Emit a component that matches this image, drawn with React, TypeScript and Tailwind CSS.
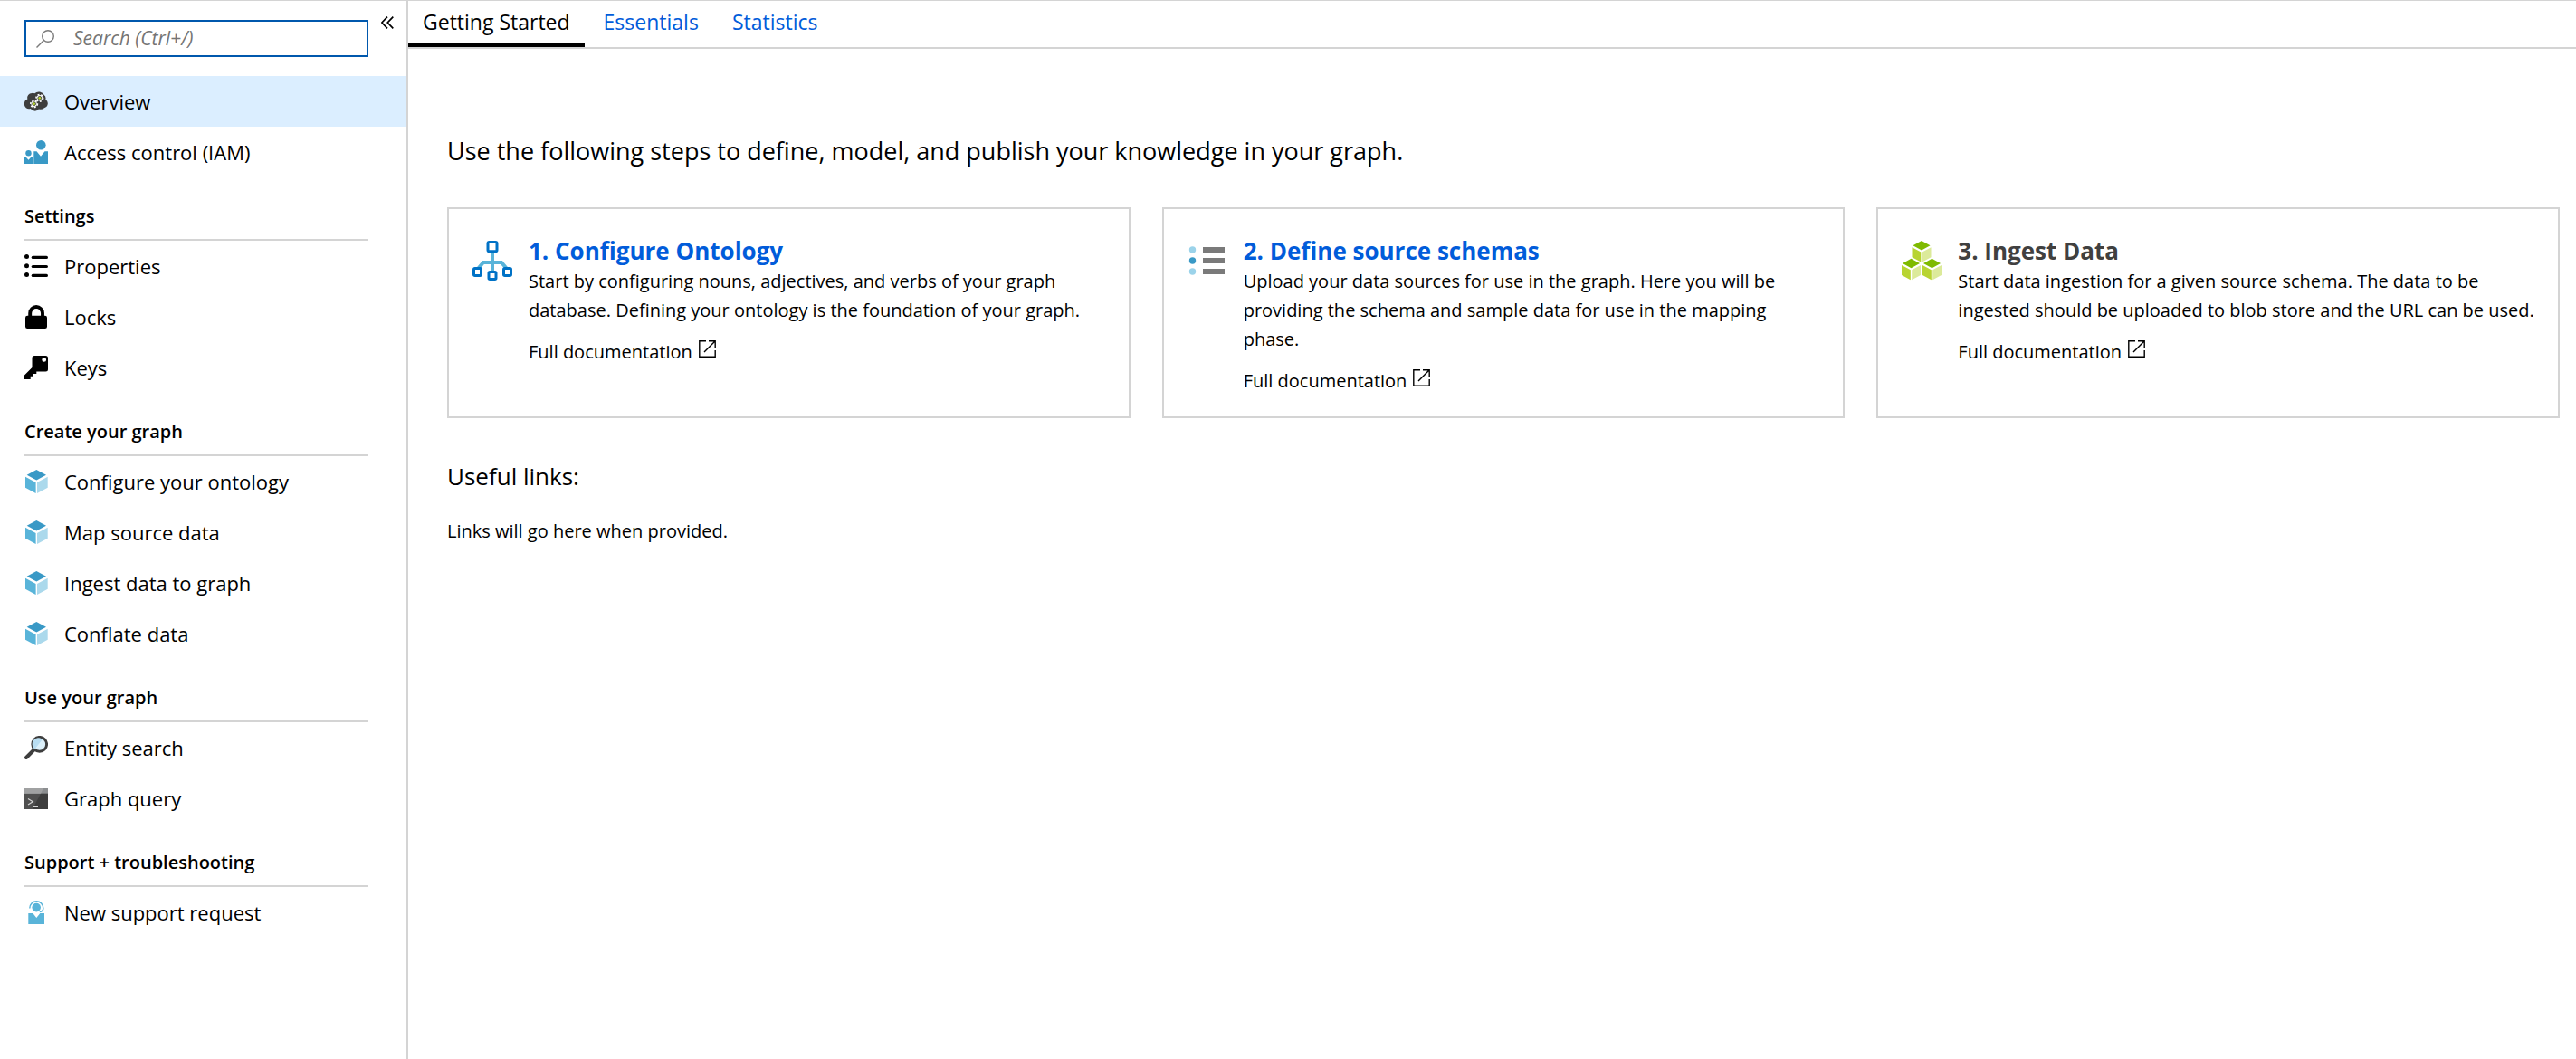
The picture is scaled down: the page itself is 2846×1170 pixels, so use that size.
import type { ReactNode } from "react";

const icon = "size-[26px] shrink-0";

function Gear({ cx, cy, r }: { cx: number; cy: number; r: number }) {
  return (
    <g>
      <circle cx={cx} cy={cy} r={r} fill="#fff" />
      <circle cx={cx} cy={cy} r={r + 0.6} fill="none" stroke="#fff" strokeWidth="1.6" strokeDasharray="1.9 1.9" />
      <circle cx={cx} cy={cy} r="1.9" fill="#b8d432" stroke="#3e3e3e" strokeWidth="0.9" />
    </g>
  );
}

function OverviewIcon() {
  return (
    <svg viewBox="0 0 26 26" className={icon} aria-hidden="true">
      <path
        d="M8.2 3.9a5 5 0 0 1 3.1.4A6.6 6.6 0 0 1 21.8 6a4.6 4.6 0 0 1 1.500 5 5 5 0 0 1-1.400 9.200 6 6 0 0 1-6 1.300 5.400 5.400 0 0 1-9-.6A5 5 0 0 1 0 15.500a5 5 0 0 1 3.400-5.100 5 5 0 0 1 4.800-6.500Z"
        fill="#3e3e3e"
      />
      <Gear cx={16.8} cy={9.3} r={3.2} />
      <Gear cx={10.6} cy={15.7} r={3.2} />
    </svg>
  );
}

function PeopleIcon() {
  return (
    <svg viewBox="0 0 26 26" className={icon} fill="#3999c6" aria-hidden="true">
      <circle cx="18.3" cy="5.3" r="5.3" />
      <path d="M10.3 12.3h3.200L18 17.800l4.500-5.500H26V26H10.300Z" />
      <circle cx="4.5" cy="14.3" r="3.2" />
      <path d="M0 18.800h1.800l2.700 3 2.700-3H9V26H0Z" />
    </svg>
  );
}

function ListIcon() {
  return (
    <svg viewBox="0 0 26 26" className={icon} aria-hidden="true">
      {[2.6, 12.7, 22.6].map((y) => (
        <g key={y}>
          <circle cx="2.5" cy={y} r="2.5" />
          <rect x="7.7" y={y - 0.8} width="18.3" height="3.2" rx="1.6" />
        </g>
      ))}
    </svg>
  );
}

function LockIcon() {
  return (
    <svg viewBox="0 0 26 26" className={icon} aria-hidden="true">
      <rect x="1" y="11.7" width="24" height="14.3" rx="2.2" />
      <path d="M6.200 13V9a6.900 7 0 0 1 13.800 0v4" fill="none" stroke="#000" strokeWidth="3.9" />
    </svg>
  );
}

function KeyIcon() {
  return (
    <svg viewBox="0 0 26 26" className={icon} aria-hidden="true">
      <path
        fillRule="evenodd"
        d="M11 0h12.500A2.500 2.500 0 0 1 26 2.500V15a2.500 2.500 0 0 1-2.500 2.500H13.300V20H10v2.700H6.700V26H0v-4.500l8.500-8.500V2.500A2.500 2.500 0 0 1 11 0Zm10.700 2a2.400 2.400 0 1 0 0 4.800 2.400 2.400 0 0 0 0-4.800Z"
      />
    </svg>
  );
}

function CubeIcon() {
  return (
    <svg viewBox="0 0 26 26" className={icon} aria-hidden="true">
      <path d="M13.300 0 24 5.800l-10.700 5.800L2.700 5.800Z" fill="#3999c6" />
      <path d="M1 7.700 12.600 14v12L1 19.800Z" fill="#59b4d9" />
      <path d="M25.700 7.700 14 14v12l11.700-6.200Z" fill="#abd9ec" />
    </svg>
  );
}

function MagnifierIcon() {
  return (
    <svg viewBox="0 0 26 26" className={icon} aria-hidden="true">
      <path d="m2 24 8.500-8.500" stroke="#3e3e3e" strokeWidth="4" strokeLinecap="round" />
      <circle cx="16.7" cy="9.3" r="7.9" fill="#dcf0fa" stroke="#3e3e3e" strokeWidth="2.9" />
      <path d="M11.300 14.700A6.500 6.500 0 0 1 20 3.700Z" fill="#b9def2" />
    </svg>
  );
}

function TerminalIcon() {
  return (
    <svg viewBox="0 0 26 26" className={icon} aria-hidden="true">
      <path d="M0 2h26v23H0Z" fill="#3e3e3e" />
      <path d="M0 2h21L9 25H0Z" fill="#4f4f4f" />
      <path d="M0 2h26v5.700H0Z" fill="#8c8e90" />
      <path d="M0 2h21l-3 5.700H0Z" fill="#a0a1a2" />
      <path d="m4 13.500 5.300 3.200L4 20M9.300 22.300H15" fill="none" stroke="#d4d4d4" strokeWidth="1.2" />
    </svg>
  );
}

function SupportIcon() {
  return (
    <svg viewBox="0 0 26 26" className={icon} fill="#59b4d9" aria-hidden="true">
      <circle cx="13.2" cy="7.6" r="4.8" />
      <path d="M5.800 8.500a7.500 7.700 0 0 1 15 0c0 2-1 3.500-4 4" fill="none" stroke="#59b4d9" strokeWidth="1.5" />
      <path d="M4.300 14h5l4 5 4-5H22v12H4.300Z" />
    </svg>
  );
}

function HierarchyIcon() {
  return (
    <svg viewBox="0 0 44 44" className="mt-[7px] size-11 shrink-0" fill="none" aria-hidden="true">
      <path d="M22 13v20M6 31l6-7h20l6 7" stroke="#59b4d9" strokeWidth="4" />
      <g fill="#fff" stroke="#0072c6" strokeWidth="3">
        <rect x="17" y="1.5" width="10" height="10.3" rx="1.5" />
        <rect x="1.5" y="30.5" width="8" height="8" rx="1.2" />
        <rect x="18" y="34.5" width="8" height="8" rx="1.2" />
        <rect x="34.5" y="30.5" width="8" height="8" rx="1.2" />
      </g>
    </svg>
  );
}

function SchemaIcon() {
  return (
    <svg viewBox="0 0 44 44" className="mt-[7px] size-11 shrink-0" aria-hidden="true">
      {[10, 22, 34].map((y) => (
        <g key={y}>
          <circle cx="5.5" cy={y} r="3.7" fill={y === 22 ? "#3999c6" : "#9bd3ea"} />
          <rect x="17" y={y - 3} width="24" height="6" fill="#7a7a7a" />
        </g>
      ))}
    </svg>
  );
}

function BlocksIcon() {
  return (
    <svg viewBox="0 0 44 44" className="mt-[7px] size-11 shrink-0" aria-hidden="true">
      {["translate(11.5 0)", "translate(0 19.7)", "translate(23 19.7)"].map((t) => (
        <g key={t} transform={t}>
          <path d="m10.500 0 9.500 5.300-9.500 5.300L1 5.300Z" fill="#7fba00" />
          <path d="m0 7.200 9.800 5.400v11L0 18.300Z" fill="#b8d432" />
          <path d="m21 7.200-9.800 5.400v11l9.800-5.300Z" fill="#dcea9a" />
        </g>
      ))}
    </svg>
  );
}

type Item = { label: string; icon: ReactNode; active?: boolean };

function NavItem({ item }: { item: Item }) {
  return (
    <li>
      <a
        href="#"
        aria-current={item.active ? "page" : undefined}
        className={`flex h-14 items-center gap-[18px] pl-[27px] text-[22px] ${item.active ? "bg-[#dbeeff]" : ""}`}
      >
        {item.icon}
        {item.label}
      </a>
    </li>
  );
}

const topItems: Item[] = [
  { label: "Overview", icon: <OverviewIcon />, active: true },
  { label: "Access control (IAM)", icon: <PeopleIcon /> },
];

const sections: { title: string; items: Item[] }[] = [
  {
    title: "Settings",
    items: [
      { label: "Properties", icon: <ListIcon /> },
      { label: "Locks", icon: <LockIcon /> },
      { label: "Keys", icon: <KeyIcon /> },
    ],
  },
  {
    title: "Create your graph",
    items: [
      { label: "Configure your ontology", icon: <CubeIcon /> },
      { label: "Map source data", icon: <CubeIcon /> },
      { label: "Ingest data to graph", icon: <CubeIcon /> },
      { label: "Conflate data", icon: <CubeIcon /> },
    ],
  },
  {
    title: "Use your graph",
    items: [
      { label: "Entity search", icon: <MagnifierIcon /> },
      { label: "Graph query", icon: <TerminalIcon /> },
    ],
  },
  {
    title: "Support + troubleshooting",
    items: [{ label: "New support request", icon: <SupportIcon /> }],
  },
];

const cards = [
  {
    title: "1. Configure Ontology",
    link: true,
    icon: <HierarchyIcon />,
    text: "Start by configuring nouns, adjectives, and verbs of your graph database. Defining your ontology is the foundation of your graph.",
  },
  {
    title: "2. Define source schemas",
    link: true,
    icon: <SchemaIcon />,
    text: "Upload your data sources for use in the graph. Here you will be providing the schema and sample data for use in the mapping phase.",
  },
  {
    title: "3. Ingest Data",
    link: false,
    icon: <BlocksIcon />,
    text: "Start data ingestion for a given source schema. The data to be ingested should be uploaded to blob store and the URL can be used.",
  },
];

function Sidebar() {
  return (
    <aside className="w-[451px] shrink-0 border-r-2 border-[#d4d4d4] pt-[21px]">
      <div className="mb-[21px] flex items-start pl-[27px]">
        <label className="flex h-[41px] w-[380px] items-center gap-[21px] border-2 border-[#0058ad] pl-[11px]">
          <svg viewBox="0 0 20 20" className="size-5 shrink-0" fill="none" stroke="#7a7a7a" strokeWidth="1.4" aria-hidden="true">
            <circle cx="13" cy="7" r="6.3" />
            <path d="M8.500 11.500.500 19.500" />
          </svg>
          <input
            type="search"
            aria-label="Search"
            placeholder="Search (Ctrl+/)"
            className="min-w-0 flex-1 bg-transparent text-[21px] outline-none placeholder:text-[#757575] placeholder:italic"
          />
        </label>
        <button type="button" aria-label="Collapse menu" className="-mt-1 ml-[14px]">
          <svg viewBox="0 0 14 14" className="size-[14px]" fill="none" stroke="#000" strokeWidth="1.7" aria-hidden="true">
            <path d="M7 .600.900 7 7 13.400M13.300.600 7.200 7l6.100 6.400" />
          </svg>
        </button>
      </div>
      <nav>
        <ul>
          {topItems.map((item) => (
            <NavItem key={item.label} item={item} />
          ))}
        </ul>
        {sections.map((section) => (
          <section key={section.title}>
            <h2 className="mr-[42px] ml-[27px] border-b-2 border-[#d4d4d4] pt-[27px] pb-[9px] text-[20px] leading-8 font-semibold">
              {section.title}
            </h2>
            <ul>
              {section.items.map((item) => (
                <NavItem key={item.label} item={item} />
              ))}
            </ul>
          </section>
        ))}
      </nav>
    </aside>
  );
}

export default function App() {
  return (
    <div className="flex min-h-screen border-t border-[#d4d4d4] bg-white font-['Open_Sans','Noto_Sans',sans-serif] text-black">
      <Sidebar />
      <main className="min-w-0 flex-1">
        <div role="tablist" className="flex gap-[5px] border-b-2 border-[#d4d4d4] text-[23px] leading-[47px]">
          {["Getting Started", "Essentials", "Statistics"].map((tab, i) => (
            <button
              key={tab}
              type="button"
              role="tab"
              aria-selected={i === 0}
              className={`border-b-4 px-4 ${i === 0 ? "border-black" : "border-transparent text-[#015cda]"}`}
            >
              {tab}
            </button>
          ))}
        </div>
        <div className="pt-[95px] pr-[18px] pl-[43px]">
          <h1 className="text-[27px] leading-9">
            Use the following steps to define, model, and publish your knowledge in your graph.
          </h1>
          <div className="mt-11 grid grid-cols-3 gap-[35px]">
            {cards.map((card) => (
              <article key={card.title} className="flex gap-[18px] border-2 border-[#d4d4d4] pt-7 pr-[22px] pb-6 pl-[26px]">
                {card.icon}
                <div className="min-w-0 flex-1">
                  <h2 className={`text-[26px] leading-9 font-bold ${card.link ? "text-[#015cda]" : "text-[#404040]"}`}>
                    {card.link ? <a href="#">{card.title}</a> : card.title}
                  </h2>
                  <p className="text-[20px] leading-8">{card.text}</p>
                  <a href="#" className="mt-[15px] inline-flex items-start gap-[7px] text-[20px] leading-[30px]">
                    Full documentation
                    <svg viewBox="0 0 19 19" className="mt-0.5 size-[19px]" fill="none" stroke="#000" strokeWidth="1.4" aria-hidden="true">
                      <path d="M8 .800H.800v17.400h17.400V11M11 .800h7.200V8M18.200.800 6 13" />
                    </svg>
                  </a>
                </div>
              </article>
            ))}
          </div>
          <h2 className="mt-[46px] text-[26px] leading-9">Useful links:</h2>
          <p className="mt-[27px] text-[20px] leading-8">Links will go here when provided.</p>
        </div>
      </main>
    </div>
  );
}
